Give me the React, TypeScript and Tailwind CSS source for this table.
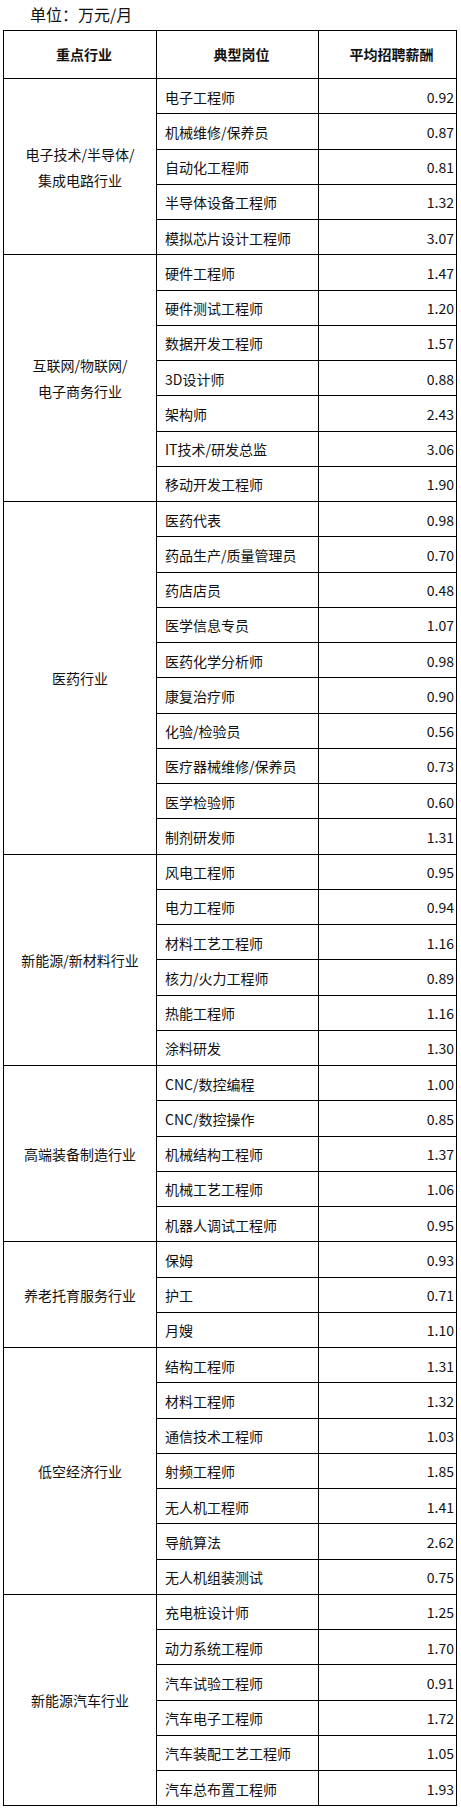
const groups: { name: React.ReactNode; rows: [string, string][] }[] = [
  {
    name: (
      <>
        电子技术/半导体/
        <br />
        集成电路行业
      </>
    ),
    rows: [
      ["电子工程师", "0.92"],
      ["机械维修/保养员", "0.87"],
      ["自动化工程师", "0.81"],
      ["半导体设备工程师", "1.32"],
      ["模拟芯片设计工程师", "3.07"],
    ],
  },
  {
    name: (
      <>
        互联网/物联网/
        <br />
        电子商务行业
      </>
    ),
    rows: [
      ["硬件工程师", "1.47"],
      ["硬件测试工程师", "1.20"],
      ["数据开发工程师", "1.57"],
      ["3D设计师", "0.88"],
      ["架构师", "2.43"],
      ["IT技术/研发总监", "3.06"],
      ["移动开发工程师", "1.90"],
    ],
  },
  {
    name: "医药行业",
    rows: [
      ["医药代表", "0.98"],
      ["药品生产/质量管理员", "0.70"],
      ["药店店员", "0.48"],
      ["医学信息专员", "1.07"],
      ["医药化学分析师", "0.98"],
      ["康复治疗师", "0.90"],
      ["化验/检验员", "0.56"],
      ["医疗器械维修/保养员", "0.73"],
      ["医学检验师", "0.60"],
      ["制剂研发师", "1.31"],
    ],
  },
  {
    name: "新能源/新材料行业",
    rows: [
      ["风电工程师", "0.95"],
      ["电力工程师", "0.94"],
      ["材料工艺工程师", "1.16"],
      ["核力/火力工程师", "0.89"],
      ["热能工程师", "1.16"],
      ["涂料研发", "1.30"],
    ],
  },
  {
    name: "高端装备制造行业",
    rows: [
      ["CNC/数控编程", "1.00"],
      ["CNC/数控操作", "0.85"],
      ["机械结构工程师", "1.37"],
      ["机械工艺工程师", "1.06"],
      ["机器人调试工程师", "0.95"],
    ],
  },
  {
    name: "养老托育服务行业",
    rows: [
      ["保姆", "0.93"],
      ["护工", "0.71"],
      ["月嫂", "1.10"],
    ],
  },
  {
    name: "低空经济行业",
    rows: [
      ["结构工程师", "1.31"],
      ["材料工程师", "1.32"],
      ["通信技术工程师", "1.03"],
      ["射频工程师", "1.85"],
      ["无人机工程师", "1.41"],
      ["导航算法", "2.62"],
      ["无人机组装测试", "0.75"],
    ],
  },
  {
    name: "新能源汽车行业",
    rows: [
      ["充电桩设计师", "1.25"],
      ["动力系统工程师", "1.70"],
      ["汽车试验工程师", "0.91"],
      ["汽车电子工程师", "1.72"],
      ["汽车装配工艺工程师", "1.05"],
      ["汽车总布置工程师", "1.93"],
    ],
  },
]

export default function App() {
  return (
    <div
      className="w-[461px] bg-white text-[#111] pb-[5px]"
      style={{ fontFamily: '"Noto Sans CJK SC", "Noto Sans", sans-serif' }}
    >
      <div className="h-[30px] pl-[30px] text-[16px] leading-[28px]">单位：万元/月</div>
      <table className="ml-[3px] w-[453px] border-collapse table-fixed text-[14px]">
        <colgroup>
          <col className="w-[153px]" />
          <col className="w-[162px]" />
          <col className="w-[138px]" />
        </colgroup>
        <thead>
          <tr>
            <th className="h-[48px] border border-black pl-[8px] text-center font-bold">重点行业</th>
            <th className="h-[48px] border border-black pl-[8px] text-center font-bold">典型岗位</th>
            <th className="h-[48px] border border-black pl-[8px] text-center font-bold">平均招聘薪酬</th>
          </tr>
        </thead>
        <tbody>
          {groups.map((g, gi) =>
            g.rows.map(([job, pay], ri) => (
              <tr key={`${gi}-${ri}`}>
                {ri === 0 && (
                  <td
                    rowSpan={g.rows.length}
                    className="border border-black px-[2px] text-center align-middle leading-[26px]"
                  >
                    {g.name}
                  </td>
                )}
                <td className="h-[35.25px] border border-black pl-[8px] pt-[2px] text-left whitespace-nowrap">
                  {job}
                </td>
                <td className="h-[35.25px] border border-black pr-[2px] pt-[2px] text-right">{pay}</td>
              </tr>
            ))
          )}
        </tbody>
      </table>
    </div>
  )
}
